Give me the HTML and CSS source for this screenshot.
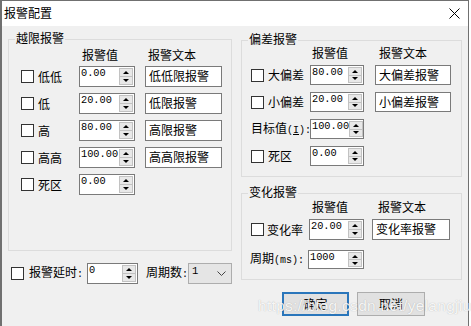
FILE: index.html
```html
<!DOCTYPE html>
<html lang="zh-CN">
<head>
<meta charset="utf-8">
<title>报警配置</title>
<link rel="stylesheet" href="styles.css">
</head>
<body>
<div class="window">
  <div class="titlebar">
    <span class="title">报警配置</span>
    <svg class="close" width="11" height="11" viewBox="0 0 11 11"><path d="M0.5 0.5 L10.5 10.5 M10.5 0.5 L0.5 10.5" stroke="#000" stroke-width="1" fill="none"/></svg>
  </div>
  <div class="body">
    <div class="col col-left">
      <div class="group g-limit">
        <div class="gtitle">越限报警</div>
        <div class="hdr"><span class="h1">报警值</span><span class="h2">报警文本</span></div>
        <div class="rows">
          <div class="row"><span class="cb"></span><span class="lbl">低低</span>
            <div class="spin"><span class="v">0.00</span><span class="arr"><span class="h"><b class="up"></b></span><span class="h"><b class="dn"></b></span></span></div>
            <div class="tb">低低限报警</div></div>
          <div class="row"><span class="cb"></span><span class="lbl">低</span>
            <div class="spin"><span class="v">20.00</span><span class="arr"><span class="h"><b class="up"></b></span><span class="h"><b class="dn"></b></span></span></div>
            <div class="tb">低限报警</div></div>
          <div class="row"><span class="cb"></span><span class="lbl">高</span>
            <div class="spin"><span class="v">80.00</span><span class="arr"><span class="h"><b class="up"></b></span><span class="h"><b class="dn"></b></span></span></div>
            <div class="tb">高限报警</div></div>
          <div class="row"><span class="cb"></span><span class="lbl">高高</span>
            <div class="spin"><span class="v">100.00</span><span class="arr"><span class="h"><b class="up"></b></span><span class="h"><b class="dn"></b></span></span></div>
            <div class="tb">高高限报警</div></div>
          <div class="row"><span class="cb"></span><span class="lbl">死区</span>
            <div class="spin"><span class="v">0.00</span><span class="arr"><span class="h"><b class="up"></b></span><span class="h"><b class="dn"></b></span></span></div></div>
        </div>
      </div>
      <div class="delay-row">
        <span class="cb"></span><span class="lbl">报警延时<span class="a">:</span></span>
        <div class="spin"><span class="v">0</span><span class="arr"><span class="h"><b class="up"></b></span><span class="h"><b class="dn"></b></span></span></div>
        <span class="lbl2">周期数<span class="a">:</span></span>
        <div class="combo"><span class="v">1</span><svg width="9" height="5" viewBox="0 0 9 5"><path d="M0.5 0.5 L4.5 4.5 L8.5 0.5" stroke="#444" stroke-width="1" fill="none"/></svg></div>
      </div>
    </div>
    <div class="col col-right">
      <div class="group g-dev">
        <div class="gtitle">偏差报警</div>
        <div class="hdr"><span class="h1">报警值</span><span class="h2">报警文本</span></div>
        <div class="rows">
          <div class="row"><span class="cb"></span><span class="lbl">大偏差</span>
            <div class="spin"><span class="v">80.00</span><span class="arr"><span class="h"><b class="up"></b></span><span class="h"><b class="dn"></b></span></span></div>
            <div class="tb">大偏差报警</div></div>
          <div class="row"><span class="cb"></span><span class="lbl">小偏差</span>
            <div class="spin"><span class="v">20.00</span><span class="arr"><span class="h"><b class="up"></b></span><span class="h"><b class="dn"></b></span></span></div>
            <div class="tb">小偏差报警</div></div>
          <div class="row"><span class="lbl lbl-target">目标值<span class="a">(<u>I</u>):</span></span>
            <div class="spin"><span class="v">100.00</span><span class="arr"><span class="h"><b class="up"></b></span><span class="h"><b class="dn"></b></span></span></div></div>
          <div class="row"><span class="cb"></span><span class="lbl">死区</span>
            <div class="spin"><span class="v">0.00</span><span class="arr"><span class="h"><b class="up"></b></span><span class="h"><b class="dn"></b></span></span></div></div>
        </div>
      </div>
      <div class="group g-rate">
        <div class="gtitle">变化报警</div>
        <div class="hdr"><span class="h1">报警值</span><span class="h2">报警文本</span></div>
        <div class="rows">
          <div class="row"><span class="cb"></span><span class="lbl">变化率</span>
            <div class="spin"><span class="v">20.00</span><span class="arr"><span class="h"><b class="up"></b></span><span class="h"><b class="dn"></b></span></span></div>
            <div class="tb">变化率报警</div></div>
          <div class="row row-period"><span class="lbl lbl-period">周期<span class="a">(ms):</span></span>
            <div class="spin"><span class="v">1000</span><span class="arr"><span class="h"><b class="up"></b></span><span class="h"><b class="dn"></b></span></span></div></div>
        </div>
      </div>
      <div class="btn-row">
        <div class="btn btn-ok">确定</div>
        <div class="btn btn-cancel">取消</div>
      </div>
    </div>
  </div>
  <div class="watermark">https://blog.csdn.net/yelangjiu</div>
</div>
</body>
</html>
```
FILE: styles.css
```css
* { box-sizing: border-box; margin: 0; padding: 0; }
html, body { width: 471px; height: 326px; overflow: hidden; background: #fff; }
body { font-family: "Noto Sans CJK SC", "Noto Sans", sans-serif; font-size: 12px; color: #000; }

.window {
  position: relative;
  width: 469px; height: 326px;
  border-left: 2px solid #707070; border-top: 1px solid #707070; border-right: 1px solid #707070;
  background: #f0f0f0;
  display: flex; flex-direction: column;
}
.titlebar {
  height: 25px; flex: none; background: #fff;
  display: flex; align-items: center; justify-content: space-between;
  padding: 0 8px 1px 2px;
}
.title { line-height: 14px; }
.close { display: block; }

.body { display: flex; padding-left: 6px; gap: 9px; }
.col { display: flex; flex-direction: column; }
.col-left { width: 224px; padding-top: 13px; }
.col-right { width: 221px; padding-top: 14px; }

.group { border: 1px solid #dcdcdc; display: flex; flex-direction: column; }
.gtitle {
  align-self: flex-start; margin: -9px 0 0 6px; padding: 0 1px;
  line-height: 14px; background: #f0f0f0;
}
.hdr { display: flex; line-height: 14px; }
.h1 { width: 36px; }
.rows { display: flex; flex-direction: column; }
.row { display: flex; align-items: center; }

.cb { width: 13px; height: 13px; flex: none; border: 1px solid #333; background: #fff; }
.lbl, .lbl2 { line-height: 14px; white-space: nowrap; flex: none; }
.a { font-family: "Liberation Mono", monospace; font-size: 10px; }
.a u { text-decoration: underline; text-underline-offset: 1px; }

.spin { display: flex; flex: none; border: 1px solid #7a7a7a; background: #fff; }
.spin .v {
  flex: 1; font-family: "Liberation Mono", monospace; font-size: 10.3px;
  line-height: 12px; padding-left: 1px; align-self: flex-start; white-space: nowrap;
}
.arr {
  width: 14px; flex: none; margin: 1px 1px 1px 0;
  border: 1px solid #c2c2c2; background: #e8e8e8;
  display: flex; flex-direction: column;
}
.arr .h { flex: 1; display: flex; align-items: center; justify-content: center; }
.arr .h + .h { border-top: 1px solid #c2c2c2; }
.up { width: 0; height: 0; border-left: 3px solid transparent; border-right: 3px solid transparent; border-bottom: 3px solid #000; }
.dn { width: 0; height: 0; border-left: 3px solid transparent; border-right: 3px solid transparent; border-top: 3px solid #000; }

.tb { flex: none; border: 1px solid #7a7a7a; background: #fff; padding: 1px 0 0 3px; line-height: 15px; white-space: nowrap; }

/* 越限报警 */
.g-limit { height: 212px; }
.g-limit .hdr { margin-top: 3px; padding-left: 73px; }
.g-limit .h2 { margin-left: 30px; }
.g-limit .rows { margin-top: 4px; gap: 6px; }
.g-limit .row { height: 21px; padding-left: 12px; }
.g-limit .lbl { margin-left: 4px; width: 41px; }
.g-limit .spin { width: 56px; height: 21px; }
.g-limit .tb { margin-left: 10px; width: 77px; height: 21px; }

/* 延时 */
.delay-row { display: flex; align-items: center; height: 21px; margin-top: 12px; padding-left: 3px; }
.delay-row .lbl { margin-left: 5px; width: 58px; }
.delay-row .spin { width: 51px; height: 21px; }
.delay-row .lbl2 { margin-left: 8px; width: 42px; }
.combo {
  width: 46px; height: 21px; border: 1px solid #adadad; background: #e5e5e5;
  display: flex; align-items: center; justify-content: space-between; padding: 0 5px 0 3px;
}
.combo .v { font-family: "Liberation Mono", monospace; font-size: 10.5px; align-self: flex-start; line-height: 12px; padding-top: 1px; }

/* 偏差报警 */
.g-dev { height: 137px; }
.g-dev .hdr { padding-left: 70px; }
.g-dev .h2 { margin-left: 31px; }
.g-dev .rows { margin-top: 5px; gap: 7px; }
.g-dev .row { height: 20px; padding-left: 9px; }
.g-dev .lbl { margin-left: 4px; width: 42px; }
.g-dev .lbl-target { margin-left: 0; width: 59px; }
.g-dev .spin { width: 54px; height: 20px; }
.g-dev .tb { margin-left: 11px; width: 76px; height: 20px; }

/* 变化报警 */
.g-rate { height: 87px; margin-top: 16px; }
.g-rate .hdr { margin-top: 1px; padding-left: 70px; }
.g-rate .h2 { margin-left: 30px; }
.g-rate .rows { margin-top: 5px; gap: 10px; }
.g-rate .row { height: 21px; padding-left: 9px; }
.g-rate .lbl { margin-left: 3px; width: 42px; }
.g-rate .spin { width: 55px; height: 21px; }
.g-rate .tb { margin-left: 8px; width: 78px; height: 21px; }
.g-rate .row-period { height: 19px; padding-left: 8px; }
.g-rate .lbl-period { margin-left: 0; width: 58px; }
.g-rate .row-period .spin { width: 56px; height: 19px; }

/* 按钮 */
.btn-row { display: flex; gap: 8px; margin-top: 12px; padding-left: 41px; }
.btn { height: 24px; display: flex; align-items: center; justify-content: center; background: #e1e1e1; line-height: 14px; }
.btn-ok { width: 67px; border: 2px solid #2a76bb; }
.btn-cancel { width: 68px; border: 1px solid #adadad; }

.watermark {
  position: absolute; left: 256px; top: 296px;
  font-family: "Liberation Sans", sans-serif; font-size: 15.5px; letter-spacing: 0.3px;
  color: rgba(255, 255, 255, 0.9); text-shadow: 0 0 1px rgba(90, 90, 90, 0.45);
  white-space: nowrap; pointer-events: none;
}
```
